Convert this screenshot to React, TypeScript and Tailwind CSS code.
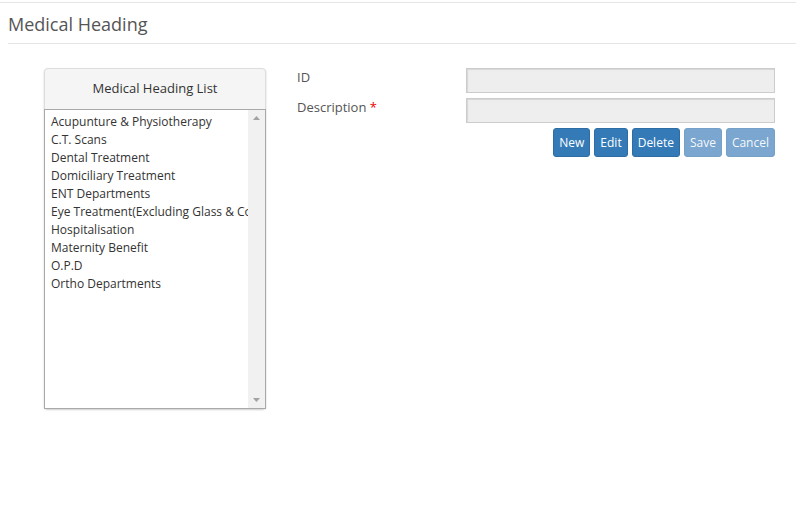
import React from "react";

const items = [
  "Acupunture & Physiotherapy",
  "C.T. Scans",
  "Dental Treatment",
  "Domiciliary Treatment",
  "ENT Departments",
  "Eye Treatment(Excluding Glass & Contact Lens)",
  "Hospitalisation",
  "Maternity Benefit",
  "O.P.D",
  "Ortho Departments",
];

function App() {
  return (
    <div className="min-h-[526px] bg-white text-[#555] font-['Open_Sans',sans-serif]">
      <div className="pt-[2px]">
        <div className="h-px bg-[#e5e5e5]" />
        <h1 className="ml-2 pl-0 pt-[10px] pb-[7px] text-[18px] leading-[23px] text-[#555] border-b border-[#e5e5e5]">
          Medical Heading
        </h1>
      </div>

      <div className="flex pt-[24px] pl-[44px]">
        {/* list panel */}
        <div className="w-[222px] h-[341px] flex flex-col rounded border border-[#ddd] bg-[#f5f5f5] shadow-[0_1px_2px_rgba(0,0,0,0.2)]">
          <div className="h-[40px] flex items-center justify-center text-[13px] text-[#333]">
            Medical Heading List
          </div>
          <div className="flex flex-1 bg-white border border-[#a9a9a9] -mx-px -mb-px">
            <div className="flex-1 overflow-hidden pt-[3px] pl-[6px]">
              {items.map((it) => (
                <div key={it} className="text-[12px] leading-[18px] text-[#333] whitespace-nowrap">
                  {it}
                </div>
              ))}
            </div>
            <div className="w-[17px] bg-[#f1f1f1] flex flex-col justify-between items-center py-[6px]">
              <svg width="7" height="4" viewBox="0 0 7 4">
                <path d="M0 4 L3.5 0 L7 4 Z" fill="#a3a3a3" />
              </svg>
              <svg width="7" height="4" viewBox="0 0 7 4">
                <path d="M0 0 L3.5 4 L7 0 Z" fill="#a3a3a3" />
              </svg>
            </div>
          </div>
        </div>

        {/* form */}
        <div className="ml-[31px] w-[478px]">
          <div className="flex h-[25px]">
            <label className="w-[169px] text-[13px] leading-[18px] text-[#555]">ID</label>
            <div className="flex-1 h-[25px] bg-[#eee] border border-[#ccc] shadow-[inset_1px_1px_1px_rgba(0,0,0,0.1)]" />
          </div>
          <div className="flex h-[25px] mt-[5px]">
            <label className="w-[169px] text-[13px] leading-[18px] text-[#555]">
              Description <span className="text-[#e00]">*</span>
            </label>
            <div className="flex-1 h-[25px] bg-[#eee] border border-[#ccc] shadow-[inset_1px_1px_1px_rgba(0,0,0,0.1)]" />
          </div>
          <div className="flex justify-end gap-[4px] mt-[5px]">
            <button className="h-[29px] px-[5px] rounded-[3px] bg-[#337ab7] border border-[#2e6da4] text-white text-[12px]">New</button>
            <button className="h-[29px] px-[5px] rounded-[3px] bg-[#337ab7] border border-[#2e6da4] text-white text-[12px]">Edit</button>
            <button className="h-[29px] px-[5px] rounded-[3px] bg-[#337ab7] border border-[#2e6da4] text-white text-[12px]">Delete</button>
            <button className="h-[29px] px-[5px] rounded-[3px] bg-[#7aa6cf] border border-[#75a0c8] text-white/95 text-[12px]">Save</button>
            <button className="h-[29px] px-[5px] rounded-[3px] bg-[#7aa6cf] border border-[#75a0c8] text-white/95 text-[12px]">Cancel</button>
          </div>
        </div>
      </div>
    </div>
  );
}

export default App;
